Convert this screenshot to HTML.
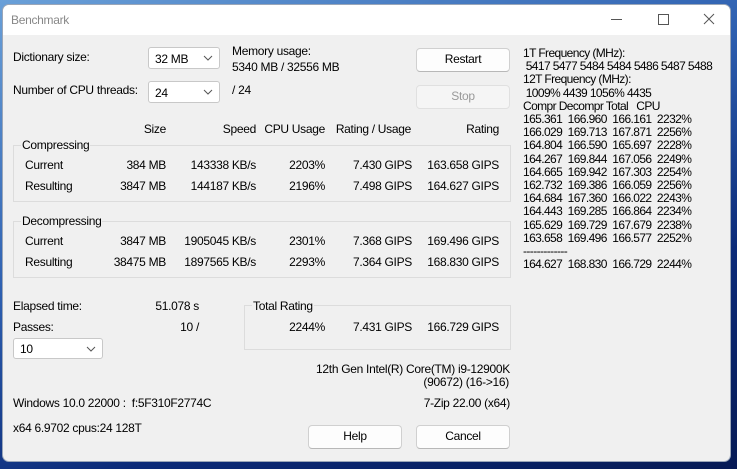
<!DOCTYPE html>
<html><head><style>
*{margin:0;padding:0;box-sizing:border-box}
body{width:737px;height:469px;overflow:hidden;background:linear-gradient(160deg,#6aa0d8 0%,#2d5fb0 40%,#0b2a78 70%,#061a55 100%);font-family:"Liberation Sans",sans-serif;font-size:12px;letter-spacing:-0.3px;color:#000;position:relative}
.win{position:absolute;left:2px;top:4px;width:729px;height:458px;background:#f0f0f0;border-radius:7px;border:1px solid #9aa6b8;overflow:hidden}
.title{position:absolute;left:0;top:0;width:100%;height:30px;background:#fff}
.t{position:absolute;white-space:nowrap;line-height:14px}
.r{text-align:right}
.box{position:absolute;border:1px solid #dcdcdc}
.lg{position:absolute;background:#f0f0f0;padding:0 1px;line-height:14px}
.combo{position:absolute;background:#fff;border:1px solid #c8c8c8;border-radius:3px}
.combo span{position:absolute;left:6px;top:4px}
.combo svg{position:absolute;right:6px;top:7px}
.btn{position:absolute;background:#fdfdfd;border:1px solid #d0d0d0;border-bottom-color:#b8b8b8;border-radius:4px;text-align:center;line-height:21px}
</style></head><body>
<div class="win">
<div class="title">
<div class="t" style="left:8px;top:8px;color:#888;font-size:12px">Benchmark</div>
<svg style="position:absolute;left:608px;top:14px" width="12" height="2"><rect width="11" height="1" fill="#555"/></svg>
<svg style="position:absolute;left:655px;top:9px" width="12" height="12"><rect x=".5" y=".5" width="10" height="10" fill="none" stroke="#555"/></svg>
<svg style="position:absolute;left:700px;top:8px" width="12" height="12"><path d="M1 1L11 11M11 1L1 11" stroke="#555"/></svg>
</div>
</div>
<div class="t" style="left:13px;top:50px">Dictionary size:</div>
<div class="t" style="left:13px;top:83px">Number of CPU threads:</div>
<div class="combo" style="left:148px;top:47px;width:72px;height:22px"><span>32 MB</span><svg width="10" height="6"><path d="M1 1L5 5L9 1" fill="none" stroke="#555"/></svg></div>
<div class="combo" style="left:148px;top:81px;width:72px;height:22px"><span>24</span><svg width="10" height="6"><path d="M1 1L5 5L9 1" fill="none" stroke="#555"/></svg></div>
<div class="t" style="left:232px;top:44px">Memory usage:</div>
<div class="t" style="left:232px;top:60px">5340 MB / 32556 MB</div>
<div class="t" style="left:232px;top:83px">/ 24</div>
<div class="btn" style="left:416px;top:48px;width:94px;height:24px">Restart</div>
<div class="btn" style="left:416px;top:85px;width:94px;height:24px;color:#999;background:#f5f5f5;border-color:#e0e0e0">Stop</div>

<div class="t r" style="left:100px;width:66px;top:122px">Size</div>
<div class="t r" style="left:170px;width:86px;top:122px">Speed</div>
<div class="t r" style="left:260px;width:65px;top:122px">CPU Usage</div>
<div class="t r" style="left:330px;width:81px;top:122px">Rating / Usage</div>
<div class="t r" style="left:420px;width:79px;top:122px">Rating</div>

<div class="box" style="left:13px;top:145px;width:498px;height:57px"></div>
<div class="lg" style="left:21px;top:138px">Compressing</div>
<div class="box" style="left:13px;top:221px;width:498px;height:57px"></div>
<div class="lg" style="left:21px;top:214px">Decompressing</div>

<div class="t" style="left:25px;top:158px">Current</div>
<div class="t" style="left:25px;top:179px">Resulting</div>
<div class="t" style="left:25px;top:234px">Current</div>
<div class="t" style="left:25px;top:255px">Resulting</div>

<div class="t r" style="left:90px;width:76px;top:158px">384 MB</div>
<div class="t r" style="left:160px;width:96px;top:158px">143338 KB/s</div>
<div class="t r" style="left:260px;width:65px;top:158px">2203%</div>
<div class="t r" style="left:330px;width:82px;top:158px">7.430 GIPS</div>
<div class="t r" style="left:420px;width:79px;top:158px">163.658 GIPS</div>

<div class="t r" style="left:90px;width:76px;top:179px">3847 MB</div>
<div class="t r" style="left:160px;width:96px;top:179px">144187 KB/s</div>
<div class="t r" style="left:260px;width:65px;top:179px">2196%</div>
<div class="t r" style="left:330px;width:82px;top:179px">7.498 GIPS</div>
<div class="t r" style="left:420px;width:79px;top:179px">164.627 GIPS</div>

<div class="t r" style="left:90px;width:76px;top:234px">3847 MB</div>
<div class="t r" style="left:160px;width:96px;top:234px">1905045 KB/s</div>
<div class="t r" style="left:260px;width:65px;top:234px">2301%</div>
<div class="t r" style="left:330px;width:82px;top:234px">7.368 GIPS</div>
<div class="t r" style="left:420px;width:79px;top:234px">169.496 GIPS</div>

<div class="t r" style="left:90px;width:76px;top:255px">38475 MB</div>
<div class="t r" style="left:160px;width:96px;top:255px">1897565 KB/s</div>
<div class="t r" style="left:260px;width:65px;top:255px">2293%</div>
<div class="t r" style="left:330px;width:82px;top:255px">7.364 GIPS</div>
<div class="t r" style="left:420px;width:79px;top:255px">168.830 GIPS</div>

<div class="t" style="left:13px;top:299px">Elapsed time:</div>
<div class="t r" style="left:120px;width:79px;top:299px">51.078 s</div>
<div class="t" style="left:13px;top:320px">Passes:</div>
<div class="t r" style="left:120px;width:79px;top:320px">10 /</div>
<div class="combo" style="left:13px;top:338px;width:90px;height:21px"><span style="top:3px">10</span><svg width="10" height="6"><path d="M1 1L5 5L9 1" fill="none" stroke="#555"/></svg></div>

<div class="box" style="left:244px;top:305px;width:267px;height:45px"></div>
<div class="lg" style="left:252px;top:299px">Total Rating</div>
<div class="t r" style="left:260px;width:65px;top:320px">2244%</div>
<div class="t r" style="left:330px;width:82px;top:320px">7.431 GIPS</div>
<div class="t r" style="left:420px;width:79px;top:320px">166.729 GIPS</div>

<div class="t r" style="left:300px;width:210px;top:362px">12th Gen Intel(R) Core(TM) i9-12900K</div>
<div class="t r" style="left:300px;width:209px;top:375px">(90672) (16-&gt;16)</div>
<div class="t" style="left:13px;top:396px">Windows 10.0 22000 :&nbsp; f:5F310F2774C</div>
<div class="t r" style="left:300px;width:210px;top:396px">7-Zip 22.00 (x64)</div>
<div class="t" style="left:13px;top:421px">x64 6.9702 cpus:24 128T</div>
<div class="btn" style="left:308px;top:425px;width:94px;height:24px">Help</div>
<div class="btn" style="left:416px;top:425px;width:94px;height:24px">Cancel</div>

<div class="t" style="left:523px;top:47px;line-height:13.2px;letter-spacing:-0.6px">1T Frequency (MHz):<br>&nbsp;5417 5477 5484 5484 5486 5487 5488<br>12T Frequency (MHz):<br>&nbsp;1009% 4439 1056% 4435<br>Compr Decompr Total &nbsp; CPU<br>165.361 &nbsp;166.960 &nbsp;166.161 &nbsp;2232%<br>166.029 &nbsp;169.713 &nbsp;167.871 &nbsp;2256%<br>164.804 &nbsp;166.590 &nbsp;165.697 &nbsp;2228%<br>164.267 &nbsp;169.844 &nbsp;167.056 &nbsp;2249%<br>164.665 &nbsp;169.942 &nbsp;167.303 &nbsp;2254%<br>162.732 &nbsp;169.386 &nbsp;166.059 &nbsp;2256%<br>164.684 &nbsp;167.360 &nbsp;166.022 &nbsp;2243%<br>164.443 &nbsp;169.285 &nbsp;166.864 &nbsp;2234%<br>165.629 &nbsp;169.729 &nbsp;167.679 &nbsp;2238%<br>163.658 &nbsp;169.496 &nbsp;166.577 &nbsp;2252%<br>-------------<br>164.627 &nbsp;168.830 &nbsp;166.729 &nbsp;2244%</div>
</body></html>
